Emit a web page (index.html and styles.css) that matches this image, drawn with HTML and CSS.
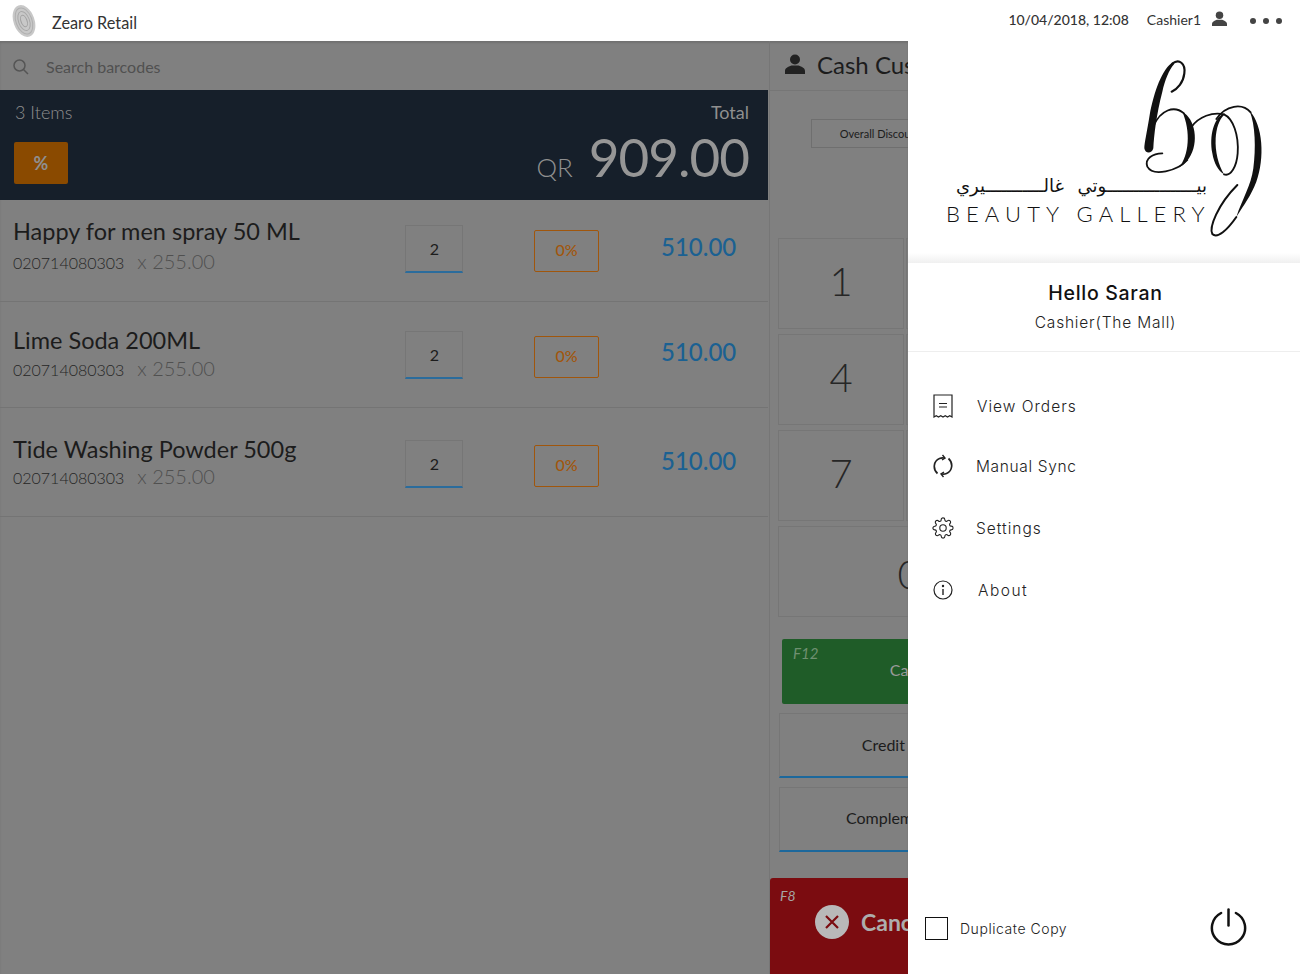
FILE: index.html
```html
<!DOCTYPE html>
<html lang="en">

<head>
    <meta charset="UTF-8">
    <meta name="viewport" content="width=device-width, initial-scale=1.0">
    <title>Zearo Retail</title>
    <link rel="stylesheet" href="styles.css">
</head>

<body>
<!-- Top bar -->
<header class="topbar">
    <svg class="brand-mark" width="26" height="34" viewBox="0 0 26 34">
        <g transform="rotate(-20 13 17)" fill="none">
            <ellipse cx="13" cy="17" rx="10.500" ry="16.500" fill="#c8c8c8"/>
            <ellipse cx="13" cy="17" rx="8" ry="13.500" stroke="#b0b0b0"/>
            <ellipse cx="13" cy="17" rx="5.500" ry="10" stroke="#a8a8a8"/>
            <ellipse cx="13" cy="17" rx="3" ry="6" stroke="#a0a0a0"/>
        </g>
    </svg>
    <span class="brand-name">Zearo Retail</span>
    <span class="topbar-date">10/04/2018, 12:08</span>
    <span class="topbar-user">Cashier1</span>
    <svg class="topbar-person" width="15" height="15" viewBox="0 0 20 20">
        <circle cx="10" cy="5.500" r="5"/>
        <path d="M0 20v-3c0-3 3-4 6.500-5.500h7C17 13 20 14 20 17v3z"/>
    </svg>
    <div class="dots"><i></i><i></i><i></i></div>
</header>

<div class="layout">
    <main class="pos">
        <!-- Cart column -->
        <section class="cart">
            <div class="search">
                <svg width="16" height="16" viewBox="0 0 16 16" fill="none" stroke="#555" stroke-width="1.500">
                    <circle cx="6.500" cy="6.500" r="5.500"/>
                    <path d="M10.500 10.500L15 15"/>
                </svg>
                <span>Search barcodes</span>
            </div>

            <div class="summary">
                <div class="summary-left">
                    <div class="item-count">3 Items</div>
                    <div class="percent-btn">%</div>
                </div>
                <div class="summary-right">
                    <div class="total-label">Total</div>
                    <div class="total-line"><span class="currency">QR</span><span class="total-value">909.00</span></div>
                </div>
            </div>

            <div class="cart-row row-first">
                <div class="item-info">
                    <div class="item-name">Happy for men spray 50 ML</div>
                    <div class="item-sub"><span>020714080303</span><span class="item-unit">x 255.00</span></div>
                </div>
                <div class="qty">2</div>
                <div class="discount">0%</div>
                <div class="price">510.00</div>
            </div>
            <div class="cart-row row-second">
                <div class="item-info">
                    <div class="item-name">Lime Soda 200ML</div>
                    <div class="item-sub"><span>020714080303</span><span class="item-unit">x 255.00</span></div>
                </div>
                <div class="qty">2</div>
                <div class="discount">0%</div>
                <div class="price">510.00</div>
            </div>
            <div class="cart-row row-third">
                <div class="item-info">
                    <div class="item-name">Tide Washing Powder 500g</div>
                    <div class="item-sub"><span>020714080303</span><span class="item-unit">x 255.00</span></div>
                </div>
                <div class="qty">2</div>
                <div class="discount">0%</div>
                <div class="price">510.00</div>
            </div>
        </section>

        <!-- Payment column, runs on under the drawer -->
        <section class="payment">
            <div class="customer">
                <svg width="20" height="20" viewBox="0 0 20 20" fill="#222">
                    <circle cx="10" cy="5.500" r="5"/>
                    <path d="M0 20v-3c0-3 3-4 6.500-5.500h7C17 13 20 14 20 17v3z"/>
                </svg>
                <span>Cash Customer</span>
            </div>
            <div class="overall-discount">Overall Discount</div>
            <div class="numpad">
                <div class="key">1</div><div class="key">2</div>
                <div class="key">4</div><div class="key">5</div>
                <div class="key">7</div><div class="key">8</div>
                <div class="key key-wide">0</div>
            </div>
            <div class="pay-btn pay-cash"><em>F12</em><span>Cash</span></div>
            <div class="pay-btn pay-plain"><span>Credit Card</span></div>
            <div class="pay-btn pay-plain pay-comp"><span>Complementary</span></div>
            <div class="cancel-btn">
                <em>F8</em>
                <div class="cancel-body">
                    <svg width="34" height="34" viewBox="0 0 34 34">
                        <circle cx="17" cy="17" r="17" fill="#b9b9b9"/>
                        <path d="M11 11l12 12M23 11L11 23" stroke="#7b0c10" stroke-width="2.200"/>
                    </svg>
                    <span>Cancel</span>
                </div>
            </div>
        </section>
    </main>

    <!-- Side drawer -->
    <aside class="drawer">
        <div class="drawer-logo">
            <svg class="monogram" width="140" height="185" viewBox="0 0 420 555">
                <g fill="#111">
                    <path d="M132 22C100 40 75 110 62 180C55 225 46 265 46 280C48 296 68 298 73 280C75 240 82 180 100 110C108 75 120 45 135 28Z"/>
                    <path d="M160 170C198 190 212 262 180 310C172 322 160 332 150 338C180 300 186 230 160 170Z"/>
                    <path d="M283 176C255 190 240 240 250 295C255 325 268 348 285 358C268 330 258 290 260 250C262 220 270 195 285 180Z"/>
                    <path d="M362 168C402 210 408 310 382 380C366 422 346 447 322 486C340 432 366 392 373 340C381 280 379 210 362 168Z"/>
                </g>
                <g fill="none" stroke="#111" stroke-width="5.500" stroke-linecap="round">
                    <path d="M130 26C150 10 170 25 166 55C163 82 146 102 128 110" stroke-width="6.500"/>
                    <path d="M74 212C95 165 135 150 165 175"/>
                    <path d="M175 315C145 348 72 366 55 335C46 310 72 296 100 295"/>
                    <path d="M188 215C210 185 250 170 285 178"/>
                    <path d="M285 178C312 190 330 240 326 295C323 335 305 365 285 358"/>
                    <path d="M262 192C290 150 340 143 365 172"/>
                    <path d="M322 486C295 525 265 552 250 537C240 518 265 450 325 390" stroke-width="6"/>
                </g>
            </svg>
            <div class="logo-text">
                <div class="logo-arabic" lang="ar" dir="rtl">بيـــــــــــــــــوتي غالـــــــــــيري</div>
                <div class="logo-latin">BEAUTY GALLERY</div>
            </div>
        </div>

        <div class="profile">
            <div class="profile-name">Hello Saran</div>
            <div class="profile-role">Cashier(The Mall)</div>
        </div>

        <nav class="menu">
            <div class="menu-item">
                <svg width="20" height="24" viewBox="0 0 20 24" fill="none" stroke="#222" stroke-width="1.200">
                    <path d="M1 23V1h18v22l-2.250-1.300-2.250 1.300-2.250-1.300-2.250 1.300-2.250-1.300-2.250 1.300-2.250-1.300z"/>
                    <path d="M6 9.500h8M6 13h8"/>
                </svg>
                <span class="menu-orders">View Orders</span>
            </div>
            <div class="menu-item">
                <svg width="20" height="24" viewBox="0 0 20 24" fill="none" stroke="#222" stroke-width="1.700">
                    <path d="M4.500 19.500C-.5 15 .5 7 6.500 4.500c1.500-.6 3-.8 4.500-.5"/>
                    <path d="M15.500 4.500c5 4.500 4 12.500-2 15-1.500.6-3 .8-4.500.5"/>
                    <path d="M9.500 1L12 4l-3 2M10.500 23L8 20l3-2" stroke-width="1.400"/>
                </svg>
                <span class="menu-sync">Manual Sync</span>
            </div>
            <div class="menu-item">
                <svg class="icon-gear" width="22" height="22" viewBox="0 0 24 24" fill="none" stroke="#222" stroke-width="1.200">
                    <circle cx="12" cy="12" r="3.500"/>
                    <path d="M19.400 15a1.650 1.650 0 0 0 .33 1.820l.06.06a2 2 0 0 1 0 2.830 2 2 0 0 1-2.830 0l-.06-.06a1.650 1.650 0 0 0-1.820-.33 1.650 1.650 0 0 0-1 1.510V21a2 2 0 0 1-2 2 2 2 0 0 1-2-2v-.09A1.650 1.650 0 0 0 9 19.400a1.650 1.650 0 0 0-1.820.33l-.06.06a2 2 0 0 1-2.830 0 2 2 0 0 1 0-2.830l.06-.06a1.650 1.650 0 0 0 .33-1.820 1.650 1.650 0 0 0-1.510-1H3a2 2 0 0 1-2-2 2 2 0 0 1 2-2h.09A1.650 1.650 0 0 0 4.600 9a1.650 1.650 0 0 0-.33-1.820l-.06-.06a2 2 0 0 1 0-2.830 2 2 0 0 1 2.830 0l.06.06a1.650 1.650 0 0 0 1.820.33H9a1.650 1.650 0 0 0 1-1.510V3a2 2 0 0 1 2-2 2 2 0 0 1 2 2v.09a1.650 1.650 0 0 0 1 1.510 1.650 1.650 0 0 0 1.820-.33l.06-.06a2 2 0 0 1 2.830 0 2 2 0 0 1 0 2.830l-.06.06a1.650 1.650 0 0 0-.33 1.820V9a1.650 1.650 0 0 0 1.510 1H21a2 2 0 0 1 2 2 2 2 0 0 1-2 2h-.09a1.650 1.650 0 0 0-1.510 1z"/>
                </svg>
                <span>Settings</span>
            </div>
            <div class="menu-item">
                <svg width="20" height="20" viewBox="0 0 20 20" fill="none" stroke="#222" stroke-width="1.200">
                    <circle cx="10" cy="10" r="9"/>
                    <path d="M10 9v6" stroke-width="1.400"/>
                    <circle cx="10" cy="6" r=".6" fill="#222"/>
                </svg>
                <span class="menu-about">About</span>
            </div>
        </nav>

        <div class="drawer-footer">
            <div class="checkbox"></div>
            <span class="checkbox-label">Duplicate Copy</span>
            <svg class="power" width="37" height="38" viewBox="0 0 36 38" fill="none" stroke="#111" stroke-width="2.500" stroke-linecap="round">
                <path d="M10.600 5A16.600 16.600 0 1 0 25.400 5"/>
                <path d="M18 1.500v16"/>
            </svg>
        </div>
    </aside>
</div>
</body>

</html>
```
FILE: styles.css
```css
* {
    box-sizing: border-box;
}

body {
    margin: 0;
    height: 974px;
    overflow: hidden;
    display: flex;
    flex-direction: column;
    background-color: #808080;
    font-family: Lato, sans-serif;
    color: #222;
}

/* Top bar */
.topbar {
    height: 41px;
    flex: none;
    display: flex;
    align-items: center;
    background-color: #ffffff;
    color: #333;
}

.brand-mark {
    margin-left: 11px;
}

.brand-name {
    margin-left: 15px;
    margin-top: 4px;
    font-size: 16.300px;
}

.topbar-date {
    margin-left: auto;
    margin-top: -2px;
    font-size: 14px;
    font-weight: 500;
}

.topbar-user {
    margin-left: 18px;
    margin-top: -2px;
    font-size: 14px;
}

.topbar-person {
    margin-left: 11px;
    margin-top: -4px;
    fill: #444;
}

.dots {
    display: flex;
    gap: 7px;
    margin-left: 23px;
    margin-right: 18px;
}

.dots i {
    width: 6px;
    height: 6px;
    border-radius: 50%;
    background-color: #444;
}

.layout {
    flex: 1;
    display: flex;
    min-height: 0;
}

.pos {
    width: 908px;
    flex: none;
    display: flex;
    overflow: hidden;
    box-shadow: inset 0 2px 2px rgba(0, 0, 0, 0.12);
}

/* Cart */
.cart {
    width: 770px;
    flex: none;
    border-right: 1px solid #767676;
}

.search {
    height: 49px;
    display: flex;
    align-items: center;
    gap: 17px;
    padding: 2px 0 0 13px;
    font-size: 16px;
    color: #505050;
}

.summary {
    width: 768px;
    height: 110px;
    display: flex;
    justify-content: space-between;
    padding: 11px 19px 0 14px;
    background-color: #161f2a;
    color: #8f8f8f;
}

.item-count {
    margin-left: 1px;
    font-size: 18px;
    font-weight: 300;
    line-height: 22px;
}

.percent-btn {
    width: 54px;
    height: 42px;
    margin-top: 19px;
    border-radius: 2px;
    background-color: #8a4a00;
    font-size: 18px;
    font-weight: 700;
    line-height: 42px;
    text-align: center;
}

.summary-right {
    text-align: right;
}

.total-label {
    font-size: 18px;
    line-height: 22px;
}

.total-line {
    display: flex;
    align-items: baseline;
    justify-content: flex-end;
    gap: 16px;
    margin-top: -1px;
}

.currency {
    font-size: 26px;
    font-weight: 300;
}

.total-value {
    font-size: 53px;
    line-height: 70px;
    letter-spacing: -1px;
    color: #969696;
}

.cart-row {
    display: flex;
    align-items: flex-start;
    width: 768px;
    padding-left: 13px;
    border-bottom: 1px solid #747474;
}

.row-first {
    height: 102px;
    padding-top: 25px;
}

.row-second {
    height: 106px;
    padding-top: 29px;
}

.row-third {
    height: 109px;
    padding-top: 32px;
}

.item-info {
    width: 392px;
    flex: none;
    margin-top: -7px;
}

.row-first .item-info {
    margin-top: -10px;
}

.item-name {
    font-size: 23.500px;
    line-height: 32px;
    color: #1c1c1c;
}

.item-sub {
    display: flex;
    align-items: baseline;
    gap: 13px;
    margin-top: -1px;
    font-size: 16px;
    font-weight: 300;
    line-height: 26px;
    color: #262626;
}

.row-first .item-sub {
    margin-top: 1px;
}

.row-third .item-sub {
    margin-top: -2px;
}

.item-unit {
    font-size: 20px;
    color: #505050;
}

.qty {
    width: 58px;
    height: 48px;
    flex: none;
    padding-left: 1px;
    border: 1px solid #767676;
    border-bottom: 2px solid #2b6c9c;
    font-size: 16px;
    line-height: 46px;
    text-align: center;
    color: #1c1c1c;
}

.discount {
    width: 65px;
    height: 42px;
    flex: none;
    margin-top: 5px;
    margin-left: 71px;
    border: 1px solid #a0560c;
    border-radius: 2px;
    font-size: 16px;
    font-weight: 500;
    line-height: 38px;
    text-align: center;
    color: #a0560c;
}

.price {
    width: 75px;
    flex: none;
    margin-left: 62px;
    margin-top: 5px;
    font-size: 24px;
    font-weight: 500;
    line-height: 32px;
    color: #1b6192;
    white-space: nowrap;
}

.row-first .price {
    margin-top: 6px;
}

/* Payment */
.payment {
    width: 260px;
    flex: none;
    position: relative;
}

.customer {
    height: 50px;
    display: flex;
    align-items: center;
    gap: 12px;
    padding: 0 0 3px 15px;
    border-bottom: 1px solid #767676;
    font-size: 24px;
    color: #1c1c1c;
    white-space: nowrap;
}

.overall-discount {
    width: 138px;
    height: 29px;
    margin: 28px 0 0 41px;
    border: 1px solid #6f6f6f;
    font-size: 11px;
    line-height: 27px;
    text-align: center;
    color: #1c1c1c;
    white-space: nowrap;
}

.numpad {
    width: 254px;
    margin: 90px 0 0 8px;
    display: grid;
    grid-template-columns: 126px 126px;
    grid-auto-rows: 91px;
    gap: 5px 2px;
}

.key {
    border: 1px solid #767676;
    font-size: 40px;
    font-weight: 300;
    line-height: 85px;
    text-align: center;
    color: #262626;
}

.key-wide {
    grid-column: span 2;
    padding: 5px 0 0 8px;
}

.pay-btn {
    position: relative;
    height: 65px;
    width: 238px;
    margin-left: 9px;
    font-size: 16px;
    text-align: center;
    line-height: 62px;
    white-space: nowrap;
}

.pay-cash {
    width: 250px;
    margin: 22px 0 0 12px;
    border-radius: 2px;
    background-color: #1f5c28;
    color: #9a9a9a;
}

.pay-cash em {
    position: absolute;
    left: 11px;
    top: 5px;
    font-size: 15px;
    line-height: 18px;
    color: #6f9071;
}

.pay-plain {
    margin-top: 9px;
    padding-left: 8px;
    border: 1px solid #767676;
    border-bottom: 2px solid #1c689c;
    color: #1c1c1c;
}

.pay-comp {
    padding-left: 8px;
    line-height: 60px;
}

.cancel-btn {
    position: relative;
    height: 96px;
    margin-top: 26px;
    border-radius: 3px 3px 0 0;
    background-color: #7b0c10;
    color: #adadad;
}

.cancel-btn em {
    position: absolute;
    left: 10px;
    top: 9px;
    font-size: 14px;
    line-height: 17px;
    color: #a5a5a5;
}

.cancel-body {
    display: flex;
    align-items: center;
    gap: 12px;
    padding: 27px 0 0 45px;
    font-size: 23px;
    font-weight: 700;
}

/* Drawer */
.drawer {
    width: 392px;
    flex: none;
    display: flex;
    flex-direction: column;
    background-color: #ffffff;
    font-family: Inter, sans-serif;
    color: #222;
}

.drawer-logo {
    position: relative;
    height: 222px;
    flex: none;
    padding: 134px 0 0 39px;
    background: linear-gradient(to bottom, #ffffff 212px, #f0f0f0 222px);
}

.monogram {
    position: absolute;
    left: 221px;
    top: 14px;
}

.logo-text {
    width: 260px;
}

.logo-arabic {
    font-family: "DejaVu Sans", sans-serif;
    font-size: 18px;
    line-height: 22px;
    text-align: right;
    word-spacing: 8px;
    color: #111;
    white-space: nowrap;
}

.logo-latin {
    margin-top: 5px;
    margin-left: -1px;
    font-family: Lato, sans-serif;
    font-size: 22px;
    font-weight: 300;
    line-height: 24px;
    letter-spacing: 6.100px;
    color: #111;
    white-space: nowrap;
}

.profile {
    height: 89px;
    flex: none;
    padding: 17px 0 0 3px;
    border-bottom: 1px solid #eeeeee;
    text-align: center;
}

.profile-name {
    font-size: 19.500px;
    font-weight: 500;
    line-height: 26px;
    letter-spacing: 0.700px;
    color: #111;
}

.profile-role {
    margin-top: 7px;
    font-size: 15.500px;
    font-weight: 300;
    line-height: 20px;
    letter-spacing: 0.800px;
}

.menu {
    padding-top: 24px;
}

.menu-item {
    height: 60px;
    display: flex;
    align-items: center;
    margin-bottom: 2px;
    padding-left: 25px;
    font-size: 15.500px;
    font-weight: 300;
    letter-spacing: 1px;
}

.menu-item:first-child {
    margin-bottom: 0;
}

.menu-item svg {
    flex: none;
}

.menu-item span {
    margin-left: 23px;
}

.menu-item .menu-orders {
    margin-left: 24px;
}

.menu-item .menu-sync {
    letter-spacing: 0.650px;
}

.menu-item .icon-gear {
    margin-left: -1px;
}

.menu-item .icon-gear + span {
    margin-left: 22px;
}

.menu-item .menu-about {
    margin-left: 25px;
    letter-spacing: 1.500px;
}

.drawer-footer {
    margin-top: auto;
    height: 92px;
    display: flex;
    align-items: center;
    padding: 0 53px 0 17px;
}

.checkbox {
    width: 23px;
    height: 23px;
    border: 1.500px solid #111;
}

.checkbox-label {
    margin-left: 12px;
    font-size: 14px;
    font-weight: 300;
    letter-spacing: 0.550px;
}

.power {
    margin-top: -2px;
    margin-left: auto;
}
```
